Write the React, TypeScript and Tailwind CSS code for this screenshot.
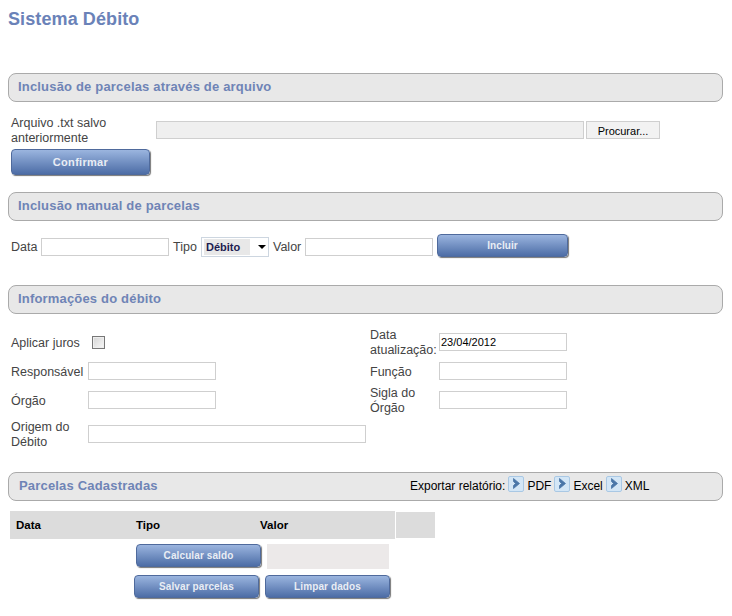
import React from 'react';

const labelClass = 'text-[12.5px] leading-[15px] text-[#444]';
const inputClass = 'h-[18px] [border-width:1.5px] border-[#cfcfcf] bg-white px-px text-[11px] text-black outline-none';

function SectionBar({ children, right, indent = 'pl-[9px]' }: { children: React.ReactNode; right?: React.ReactNode; indent?: string }) {
  return (
    <div className={`flex h-[29px] items-center rounded-[8px] border border-[#aaa] bg-[#e8e8e8] pb-[2px] ${indent}`}>
      <h2 className="w-[392px] shrink-0 text-[13px] font-bold tracking-[0.18px] text-[#6f84b6]">{children}</h2>
      {right}
    </div>
  );
}

function BlueButton({ children, className }: { children: React.ReactNode; className: string }) {
  return (
    <button
      type="button"
      className={`rounded-[4px] border border-[#4f6a9c] bg-gradient-to-b from-[#9bb5df] to-[#4d6da6] font-bold text-[#e9edf4] shadow-[1px_1px_1px_#777] ${className}`}
    >
      {children}
    </button>
  );
}

function ExportIcon() {
  return (
    <svg width="16" height="16" viewBox="0 0 16 16" className="mb-[4px] shrink-0">
      <rect x="0.5" y="0.5" width="15" height="15" rx="1.5" fill="#d3e6f6" stroke="#a9c8e4" />
      <path d="M5.5 2.5 L11.5 7.5 L5.5 12.5 L5.5 9.5 L7.5 7.5 L5.5 5.5 Z" fill="#4a76a8" stroke="#4a76a8" strokeWidth="0.8" strokeLinejoin="round" />
    </svg>
  );
}

function Field({ label, labelWidth, inputWidth, value }: { label: React.ReactNode; labelWidth: string; inputWidth: string; value?: string }) {
  return (
    <div className="flex h-[18px] items-center">
      <span className={`${labelClass} ${labelWidth} shrink-0 pt-[2px]`}>{label}</span>
      <input readOnly value={value ?? ''} className={`${inputClass} ${inputWidth}`} />
    </div>
  );
}

export default function App() {
  return (
    <div className="h-[616px] w-[732px] overflow-hidden bg-white pl-2 pr-[9px] font-['Liberation_Sans',Arial,sans-serif]">
      <header className="h-[73px] pt-[9px]">
        <h1 className="text-[18px] leading-[20px] font-bold tracking-[0.1px] text-[#6a82b8]">Sistema Débito</h1>
      </header>

      <SectionBar>Inclusão de parcelas através de arquivo</SectionBar>
      <section className="h-[90px] pl-[3px]">
        <div className="flex items-start">
          <span className={`${labelClass} mt-[14px] w-[145px] shrink-0`}>Arquivo .txt salvo anteriormente</span>
          <div className="mt-[19px] h-[18px] w-[428px] border border-[#cfcfcf] bg-[#efefef]" />
          <div className="mt-[19px] ml-[2px] flex h-[18px] w-[74px] items-center justify-center border border-[#cfcfcf] bg-[#f2f2f2] pt-[3px] text-[11px] text-black">
            Procurar...
          </div>
        </div>
        <BlueButton className="mt-[3px] block h-[26px] w-[139px] text-[11px] tracking-[0.3px]">Confirmar</BlueButton>
      </section>

      <SectionBar>Inclusão manual de parcelas</SectionBar>
      <section className="h-[64px] pl-[3px] pt-[13px]">
        <div className="flex h-[23px] items-center">
          <span className={`${labelClass} mt-[3px] w-[30px]`}>Data</span>
          <input readOnly className={`${inputClass} mt-[3px] w-[128px]`} />
          <span className={`${labelClass} mt-[3px] ml-[4px] w-[28px]`}>Tipo</span>
          <div className="mt-[3px] flex h-[20px] w-[68px] items-center border border-[#cdd6e0] pl-[2px]">
            <span className="flex h-[16px] w-[46px] items-center bg-[#e8e8e8] pl-[2px] text-[11px] font-bold text-[#1c1c50]">Débito</span>
            <span className="ml-[8px] h-0 w-0 border-x-[4px] border-t-[4px] border-x-transparent border-t-black" />
          </div>
          <span className={`${labelClass} mt-[3px] ml-[4px] w-[32px]`}>Valor</span>
          <input readOnly className={`${inputClass} mt-[3px] w-[128px]`} />
          <BlueButton className="ml-[4px] h-[23px] w-[131px] text-[10px] tracking-[0.1px]">Incluir</BlueButton>
        </div>
      </section>

      <SectionBar>Informações do débito</SectionBar>
      <section className="flex h-[158px] pl-[3px] pt-[19px]">
        <div className="flex w-[359px] shrink-0 flex-col">
          <div className="flex h-[18px] items-center">
            <span className={`${labelClass} w-[81px] pt-[2px]`}>Aplicar juros</span>
            <span className="h-[13px] w-[13px] border border-[#777] bg-gradient-to-br from-[#d4d4d4] to-[#f8f8f8] shadow-[inset_0_0_0_1px_#eee]" />
          </div>
          <div className="mt-[11px] flex flex-col gap-[11px]">
            <Field label="Responsável" labelWidth="w-[77px]" inputWidth="w-[128px]" />
            <Field label="Órgão" labelWidth="w-[77px]" inputWidth="w-[128px]" />
          </div>
          <div className="mt-[16px]">
            <Field label="Origem do Débito" labelWidth="w-[77px]" inputWidth="w-[278px]" />
          </div>
        </div>
        <div className="flex flex-col gap-[11px]">
          <Field label="Data atualização:" labelWidth="w-[69px]" inputWidth="w-[128px]" value="23/04/2012" />
          <Field label="Função" labelWidth="w-[69px]" inputWidth="w-[128px]" />
          <Field label="Sigla do Órgão" labelWidth="w-[69px]" inputWidth="w-[128px]" />
        </div>
      </section>

      <SectionBar
        indent="pl-[10px]"
        right={
          <div className="ml-[-1px] flex items-center text-[12px] text-black">
            <span>Exportar relatório:</span>
            <span className="ml-[3px] flex"><ExportIcon /></span>
            <span className="ml-[3px]">PDF</span>
            <span className="ml-[3px] flex"><ExportIcon /></span>
            <span className="ml-[3px]">Excel</span>
            <span className="ml-[3px] flex"><ExportIcon /></span>
            <span className="ml-[3px]">XML</span>
          </div>
        }
      >
        Parcelas Cadastradas
      </SectionBar>

      <section className="pl-[2px] pt-[10px]">
        <div className="flex items-center">
          <div className="flex h-[28px] w-[385px] items-center bg-[#dcdcdc] pt-[2px] text-[11.5px] font-bold text-black">
            <span className="w-[126px] pl-[6px]">Data</span>
            <span className="w-[124px]">Tipo</span>
            <span>Valor</span>
          </div>
          <div className="ml-px h-[26px] w-[39px] bg-[#dcdcdc]" />
        </div>
        <div className="mt-[5px] ml-[126px] flex items-start">
          <BlueButton className="h-[23px] w-[125px] text-[10px] tracking-[0.1px]">Calcular saldo</BlueButton>
          <div className="ml-[6px] h-[25px] w-[122px] bg-[#ece9e9]" />
        </div>
        <div className="mt-[6px] ml-[124px] flex gap-[6px]">
          <BlueButton className="h-[23px] w-[125px] text-[10px] tracking-[0.1px]">Salvar parcelas</BlueButton>
          <BlueButton className="h-[23px] w-[125px] text-[10px] tracking-[0.1px]">Limpar dados</BlueButton>
        </div>
      </section>
    </div>
  );
}
